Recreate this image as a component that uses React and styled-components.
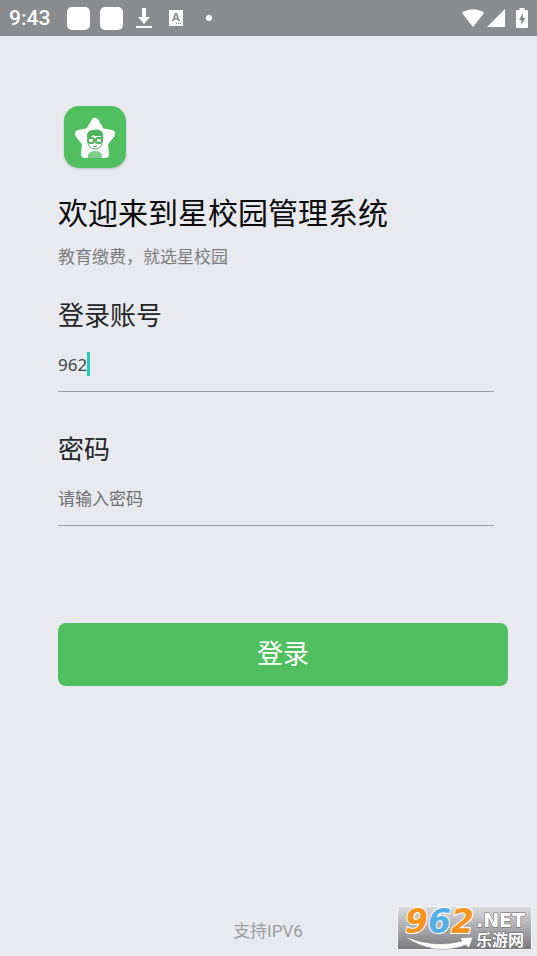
import React, { useState } from "react";
import styled, { createGlobalStyle } from "styled-components";

function StatusBar() {
  return (
    <Bar>
      <Clock>9:43</Clock>
      <AppBlock />
      <AppBlock />
      <StatusIcon width="18" height="22" viewBox="0 0 18 22" $gap={12}>
        <path d="M7 1h4v9h4l-6 7-6-7h4zM1 19h16v2H1z" />
      </StatusIcon>
      <StatusIcon width="16" height="18" viewBox="0 0 16 18" $gap={15}>
        <path
          fillRule="evenodd"
          d="M2 1h12a1 1 0 0 1 1 1v14a1 1 0 0 1-1 1H2a1 1 0 0 1-1-1V2a1 1 0 0 1 1-1zM7 4L4 12h2l.5-1.500h3L10 12h2L9 4zM8 6l1 3H7zM8 14v1h1v-1zM10 14v1h1v-1zM12 14v1h1v-1z"
        />
      </StatusIcon>
      <StatusIcon width="8" height="8" viewBox="0 0 8 8" $gap={21}>
        <circle cx="4" cy="4" r="3" />
      </StatusIcon>
      <Signals>
        <StatusIcon width="24" height="20" viewBox="0 0 24 20">
          <path d="M1 5C7 0 17 0 23 5L12 19z" />
        </StatusIcon>
        <StatusIcon width="20" height="20" viewBox="0 0 20 20" $gap={1}>
          <path d="M19 1v18H1z" />
        </StatusIcon>
        <StatusIcon width="12" height="20" viewBox="0 0 12 20" $gap={10}>
          <path
            fillRule="evenodd"
            d="M3.500 0h5v2H11a1 1 0 0 1 1 1v16a1 1 0 0 1-1 1H1a1 1 0 0 1-1-1V3a1 1 0 0 1 1-1h2.500zM7 5l-4 7h2.500v5L9.500 10H7z"
          />
        </StatusIcon>
      </Signals>
    </Bar>
  );
}

function StarLogo() {
  return (
    <Logo viewBox="0 0 74 74" role="img" aria-label="星校园">
      <rect x="6" y="6" width="62" height="62" rx="15" fill="#50bf5f" />
      <path
        d="M37 22L43 32L53 34L46 43L47 54H27L28 43L21 34L31 32z"
        fill="#fff"
        stroke="#fff"
        strokeWidth="8"
        strokeLinejoin="round"
      />
      <path d="M30 58v-2q0-5 7-5t7 5v2z" fill="#7fd08a" />
      <path
        d="M29 39q-1-9 6-9 8-2 10 4 1 3-1 7l-1-5q-6 1-8-1-2 3-5 2z"
        fill="#50b35e"
      />
      <g fill="none" stroke="#50b35e" strokeWidth="2">
        <rect x="30" y="38" width="6" height="5" rx="2" />
        <rect x="38" y="38" width="6" height="5" rx="2" />
        <path d="M36 40h2M30 44q2 5 7 5 5 0 7-5" strokeWidth="1" />
        <path d="M35 46q2 1 4 0" strokeWidth="1" />
      </g>
    </Logo>
  );
}

function SiteMark() {
  return (
    <Mark viewBox="0 0 135 44" role="img" aria-label="962.NET 乐游网">
      <defs>
        <linearGradient id="markBg" x1="0" y1="0" x2="0" y2="1">
          <stop offset="0" stopColor="#dcdcde" />
          <stop offset="1" stopColor="#7b7b7d" />
        </linearGradient>
      </defs>
      <rect width="135" height="44" fill="#f4f4f5" />
      <rect x="1" y="1" width="133" height="42" fill="url(#markBg)" />
      <MarkDigits x="8" y="27">
        <tspan fill="#f7941e">9</tspan>
        <tspan fill="#56aee6">6</tspan>
        <tspan fill="#f7941e">2</tspan>
      </MarkDigits>
      <path
        d="M7 30Q38 43 65 35L63 32L76 31L72 42L69 39Q36 51 7 30z"
        fill="#fff"
        stroke="#777"
        strokeWidth="0.500"
      />
      <MarkText x="79" y="21" $size={19}>
        .NET
      </MarkText>
      <MarkText x="79" y="40" $size={16}>
        乐游网
      </MarkText>
    </Mark>
  );
}

export default function App() {
  const [account, setAccount] = useState("962");
  const [password, setPassword] = useState("");

  return (
    <>
      <GlobalStyle />
      <Page>
        <StatusBar />
        <Content onSubmit={(e) => e.preventDefault()}>
          <StarLogo />
          <Title>欢迎来到星校园管理系统</Title>
          <Slogan>教育缴费，就选星校园</Slogan>
          <Field>
            <Label htmlFor="account">登录账号</Label>
            <InputBox>
              <Input
                id="account"
                value={account}
                onChange={(e) => setAccount(e.target.value)}
              />
              <Caret style={{ left: `${account.length}ch` }} />
            </InputBox>
          </Field>
          <Field>
            <Label htmlFor="password">密码</Label>
            <InputBox>
              <Input
                id="password"
                type="password"
                placeholder="请输入密码"
                value={password}
                onChange={(e) => setPassword(e.target.value)}
              />
            </InputBox>
          </Field>
          <LoginButton type="submit">登录</LoginButton>
        </Content>
        <Footer>支持IPV6</Footer>
        <SiteMark />
      </Page>
    </>
  );
}

const GlobalStyle = createGlobalStyle`
  * {
    box-sizing: border-box;
  }

  body {
    margin: 0;
    background: #e8eaef;
    font-family: "Noto Sans CJK SC", sans-serif;
  }
`;

const Page = styled.div`
  position: relative;
  display: flex;
  flex-direction: column;
  min-height: 100vh;
`;

const Bar = styled.header`
  display: flex;
  align-items: center;
  height: 36px;
  padding: 0 9px;
  background: #8b8c8f;
`;

const Clock = styled.span`
  margin-right: 7px;
  font-family: Roboto, sans-serif;
  font-size: 21px;
  font-weight: 500;
  color: #fff;
`;

const AppBlock = styled.span`
  width: 23px;
  height: 23px;
  margin-left: 10px;
  border-radius: 5px;
  background: #fff;
`;

const StatusIcon = styled.svg`
  flex-shrink: 0;
  margin-left: ${({ $gap = 0 }) => $gap}px;
  fill: #fff;
`;

const Signals = styled.div`
  display: flex;
  align-items: center;
  margin-left: auto;
`;

const Content = styled.form`
  display: flex;
  flex-direction: column;
  padding: 64px 29px 0 58px;
`;

const Logo = styled.svg`
  width: 74px;
  height: 74px;
  filter: drop-shadow(0 1px 1px rgba(0, 0, 0, 0.2));
`;

const Title = styled.h1`
  margin: 17px 0 13px;
  font-size: 30px;
  font-weight: 400;
  line-height: 40px;
  color: #0b0b0c;
`;

const Slogan = styled.p`
  margin: 0 0 28px;
  font-size: 17px;
  line-height: 24px;
  color: #7d7e81;
`;

const Field = styled.div`
  display: flex;
  flex-direction: column;
  margin: 0 14px 38px 0;
`;

const Label = styled.label`
  font-size: 26px;
  line-height: 36px;
  color: #252628;
`;

const InputBox = styled.div`
  position: relative;
  height: 60px;
  padding-top: 6px;
  border-bottom: 1px solid #9b9ca0;
  font-family: "Noto Sans", "Noto Sans CJK SC", sans-serif;
  font-size: 17px;
`;

const Input = styled.input`
  width: 100%;
  height: 52px;
  padding: 0;
  border: 0;
  outline: none;
  background: transparent;
  font: inherit;
  color: #444548;

  &::placeholder {
    color: #6d6e71;
    opacity: 1;
  }
`;

const Caret = styled.span`
  position: absolute;
  top: 20px;
  width: 3px;
  height: 24px;
  background: #1fcfbd;
`;

const LoginButton = styled.button`
  height: 63px;
  margin-top: 59px;
  padding: 0 0 6px;
  border: 0;
  border-radius: 8px;
  background: #50bf5f;
  font-family: inherit;
  font-size: 26px;
  color: #fff;
  cursor: pointer;
`;

const Footer = styled.footer`
  margin-top: auto;
  padding: 0 1px 13px 0;
  text-align: center;
  font-family: Roboto, "Noto Sans CJK SC", sans-serif;
  font-size: 17px;
  line-height: 24px;
  color: #9b9c9f;
`;

const Mark = styled.svg`
  position: absolute;
  right: 5px;
  bottom: 6px;
  width: 135px;
  height: 44px;
  overflow: visible;
`;

const MarkDigits = styled.text`
  font-family: "DejaVu Sans", sans-serif;
  font-size: 33px;
  font-weight: 700;
  font-style: italic;
  stroke: #fff;
  stroke-width: 2px;
  paint-order: stroke;
`;

const MarkText = styled.text`
  font-family: "DejaVu Sans", "Noto Sans CJK SC", sans-serif;
  font-size: ${({ $size }) => $size}px;
  font-weight: 700;
  fill: #fff;
  stroke: #666;
  stroke-width: 1px;
  paint-order: stroke;
`;
